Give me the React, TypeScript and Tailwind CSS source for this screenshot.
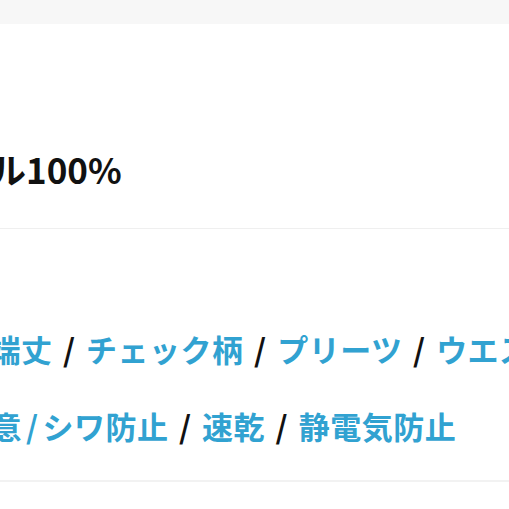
function Sep() {
  return <span className="mx-[3px] text-[#111]"> / </span>;
}

export default function App() {
  const link = 'text-[#31a2d1]';
  return (
    <div
      className="w-[509px] h-[509px] overflow-hidden bg-white"
      style={{ fontFamily: '"Noto Sans CJK JP", "Noto Sans", sans-serif' }}
    >
      <div className="h-[24px] bg-[#f7f7f7]" />

      <section className="pt-[119px] pb-[34px] border-b border-[#efefef]">
        <p className="ml-[-184px] whitespace-nowrap text-[35px] leading-[51px] font-bold text-[#111]">
          ポリエステル100%
        </p>
      </section>

      <section className="pt-[81px] pb-[16px] border-b-2 border-[#f2f2f2]">
        <p className="ml-[-105px] whitespace-nowrap text-[31px] tracking-[0.5px] leading-[77px] font-bold">
          <a className={link}>中途半端丈</a>
          <Sep />
          <a className={link}>チェック柄</a>
          <Sep />
          <a className={link}>プリーツ</a>
          <Sep />
          <a className={link}>ウエストゴム</a>
        </p>
        <p className="ml-[-104px] whitespace-nowrap text-[31px] tracking-[0.5px] leading-[77px] font-bold">
          <a className={link}>
            取扱注意<span className="mx-[4px]">/</span>シワ防止
          </a>
          <Sep />
          <a className={link}>速乾</a>
          <Sep />
          <a className={link}>静電気防止</a>
        </p>
      </section>
    </div>
  );
}
